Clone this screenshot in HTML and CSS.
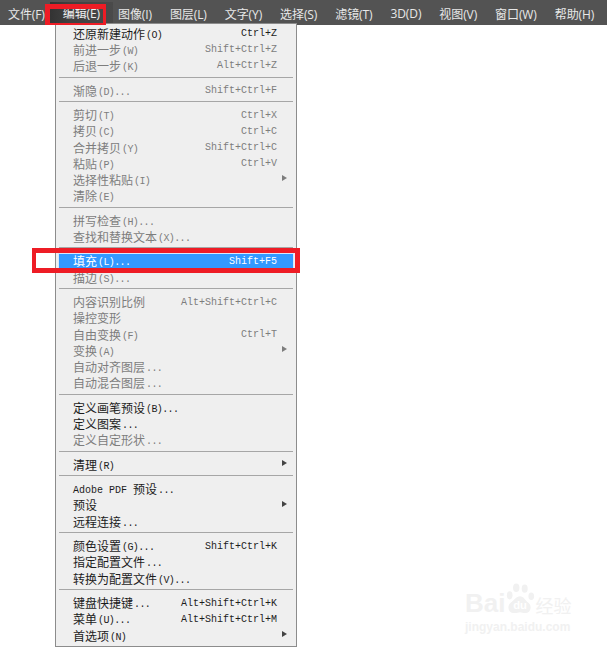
FILE: index.html
```html
<!DOCTYPE html>
<html lang="zh">
<head>
<meta charset="utf-8">
<title>编辑菜单</title>
<link rel="stylesheet" href="styles.css">
</head>
<body>
<nav class="menubar">
  <span class="top">文件(F)</span>
  <span class="top active">编辑(E)</span>
  <span class="top">图像(I)</span>
  <span class="top">图层(L)</span>
  <span class="top">文字(Y)</span>
  <span class="top">选择(S)</span>
  <span class="top">滤镜(T)</span>
  <span class="top">3D(D)</span>
  <span class="top">视图(V)</span>
  <span class="top">窗口(W)</span>
  <span class="top">帮助(H)</span>
</nav>

<div class="menu">
  <div class="row"><span>还原新建动作<i>(O)</i></span><kbd>Ctrl+Z</kbd></div>
  <div class="row off"><span>前进一步<i>(W)</i></span><kbd>Shift+Ctrl+Z</kbd></div>
  <div class="row off"><span>后退一步<i>(K)</i></span><kbd>Alt+Ctrl+Z</kbd></div>
  <hr class="sep">
  <div class="row off"><span>渐隐<i>(D)...</i></span><kbd>Shift+Ctrl+F</kbd></div>
  <hr class="sep">
  <div class="row off"><span>剪切<i>(T)</i></span><kbd>Ctrl+X</kbd></div>
  <div class="row off"><span>拷贝<i>(C)</i></span><kbd>Ctrl+C</kbd></div>
  <div class="row off"><span>合并拷贝<i>(Y)</i></span><kbd>Shift+Ctrl+C</kbd></div>
  <div class="row off"><span>粘贴<i>(P)</i></span><kbd>Ctrl+V</kbd></div>
  <div class="row off sub"><span>选择性粘贴<i>(I)</i></span></div>
  <div class="row off"><span>清除<i>(E)</i></span></div>
  <hr class="sep">
  <div class="row off"><span>拼写检查<i>(H)...</i></span></div>
  <div class="row off"><span>查找和替换文本<i>(X)...</i></span></div>
  <hr class="sep">
  <div class="row hot"><span>填充<i>(L)...</i></span><kbd>Shift+F5</kbd></div>
  <div class="row off"><span>描边<i>(S)...</i></span></div>
  <hr class="sep">
  <div class="row off"><span>内容识别比例</span><kbd>Alt+Shift+Ctrl+C</kbd></div>
  <div class="row off"><span>操控变形</span></div>
  <div class="row off"><span>自由变换<i>(F)</i></span><kbd>Ctrl+T</kbd></div>
  <div class="row off sub"><span>变换<i>(A)</i></span></div>
  <div class="row off"><span>自动对齐图层<i>...</i></span></div>
  <div class="row off"><span>自动混合图层<i>...</i></span></div>
  <hr class="sep">
  <div class="row"><span>定义画笔预设<i>(B)...</i></span></div>
  <div class="row"><span>定义图案<i>...</i></span></div>
  <div class="row off"><span>定义自定形状<i>...</i></span></div>
  <hr class="sep">
  <div class="row sub"><span>清理<i>(R)</i></span></div>
  <hr class="sep">
  <div class="row"><span><i class="wide">Adobe PDF </i>预设<i>...</i></span></div>
  <div class="row sub"><span>预设</span></div>
  <div class="row"><span>远程连接<i>...</i></span></div>
  <hr class="sep">
  <div class="row"><span>颜色设置<i>(G)...</i></span><kbd>Shift+Ctrl+K</kbd></div>
  <div class="row"><span>指定配置文件<i>...</i></span></div>
  <div class="row"><span>转换为配置文件<i>(V)...</i></span></div>
  <hr class="sep">
  <div class="row"><span>键盘快捷键<i>...</i></span><kbd>Alt+Shift+Ctrl+K</kbd></div>
  <div class="row"><span>菜单<i>(U)...</i></span><kbd>Alt+Shift+Ctrl+M</kbd></div>
  <div class="row sub"><span>首选项<i>(N)</i></span></div>
</div>

<div class="mark mark-top"></div>
<div class="mark mark-row"><div class="patch"></div></div>

<div class="watermark">
  <div class="wm-line">
    <span class="wm-bai">Bai</span>
    <svg class="wm-paw" viewBox="0 0 32 34" aria-hidden="true">
      <ellipse cx="5" cy="13" rx="3" ry="4.4"/>
      <ellipse cx="12" cy="5" rx="3.4" ry="4.6"/>
      <ellipse cx="21" cy="6" rx="3.2" ry="4.4"/>
      <ellipse cx="28" cy="14" rx="3" ry="4"/>
      <path d="M16 14c4 0 5 4 9 7s3 11-4 11c-2 0-3-1-5-1s-3 1-6 1c-7 0-8-8-4-11s6-7 10-7z"/>
      <text class="wm-du" x="16" y="28" text-anchor="middle">du</text>
    </svg>
    <span class="wm-cn">经验</span>
  </div>
  <div class="wm-url">jingyan.baidu.com</div>
</div>
</body>
</html>
```

FILE: styles.css
```css
* { box-sizing: border-box; }

html, body {
  margin: 0;
  height: 647px;
  overflow: hidden;
  background: #fff;
}

body {
  position: relative;
  font-family: "Noto Sans CJK SC", sans-serif;
}

.menubar {
  display: flex;
  align-items: center;
  gap: 18px;
  height: 25px;
  padding: 2px 0 0 8px;
  background: #535353;
  color: #e8e8e8;
  font-family: "Open Sans", "Noto Sans CJK SC", sans-serif;
  font-size: 12px;
  white-space: nowrap;
}

.top {
  letter-spacing: -0.1px;
}

.active {
  background: linear-gradient(90deg, #333 0, #404040 30%, #4a4a4a 100%);
  margin: 0 -13px;
  padding: 0 13px;
  height: 23px;
  line-height: 23px;
  color: #f0f0f0;
}

.menu {
  position: absolute;
  left: 55px;
  top: 23px;
  width: 242px;
  height: 624px;
  padding: 1px 2px 0;
  background: #efefef;
  border: 1px solid #8c8c8c;
  font-size: 12px;
}

.row {
  display: flex;
  justify-content: space-between;
  align-items: center;
  height: 16.2px;
  padding: 0 17px 0 15px;
  color: #1c1c1c;
  white-space: nowrap;
  position: relative;
}

.row i, .row kbd {
  font-family: "Liberation Mono", monospace;
  font-size: 10px;
  font-style: normal;
}

.row kbd {
  padding-top: 1px;
}

.row i {
  margin-left: 1px;
  letter-spacing: -0.6px;
  vertical-align: 1px;
}

.row i.wide {
  margin-left: 0;
  letter-spacing: 0;
}

.off { color: #7d7d7d; }

.hot {
  background: #3399ff;
  color: #fff;
  outline: 1px solid #d6e8fb;
  outline-offset: -1px;
}

.sub::after {
  content: "";
  position: absolute;
  right: 7px;
  top: 4px;
  border-left: 5px solid #444;
  border-top: 3.5px solid transparent;
  border-bottom: 3.5px solid transparent;
}

.sub.off::after { border-left-color: #7d7d7d; }

.sep {
  height: 1px;
  margin: 3px 1px 4.4px;
  border: 0;
  background: #a6a6a6;
}

.mark {
  position: absolute;
  border-style: solid;
  border-color: #ee1c25;
}

.mark-top {
  left: 45px;
  top: 4px;
  width: 61px;
  height: 21px;
  border-width: 5px 3px 2px 5px;
}

.mark-row {
  left: 32px;
  top: 248px;
  width: 268px;
  height: 25px;
  border-width: 5px 5px 5px 4px;
}

.patch {
  width: 19px;
  height: 100%;
  background: #fff;
}

.watermark {
  position: absolute;
  left: 465px;
  top: 582px;
  width: 116px;
  color: #f1f1f1;
  font-family: "Liberation Sans", sans-serif;
}

.wm-line {
  display: flex;
  align-items: flex-end;
  height: 34px;
}

.wm-bai {
  flex: none;
  font-size: 26px;
  line-height: 26px;
  font-weight: 700;
}

.wm-paw {
  flex: none;
  width: 30px;
  height: 34px;
  fill: #f1f1f1;
}

.wm-du {
  fill: #fff;
  font-size: 12px;
  font-weight: 700;
}

.wm-cn {
  flex: none;
  font-family: "Noto Sans CJK SC", sans-serif;
  font-size: 18px;
  line-height: 22px;
  white-space: nowrap;
}

.wm-url {
  margin-top: 4px;
  font-size: 12px;
  font-weight: 700;
  white-space: nowrap;
}
```
